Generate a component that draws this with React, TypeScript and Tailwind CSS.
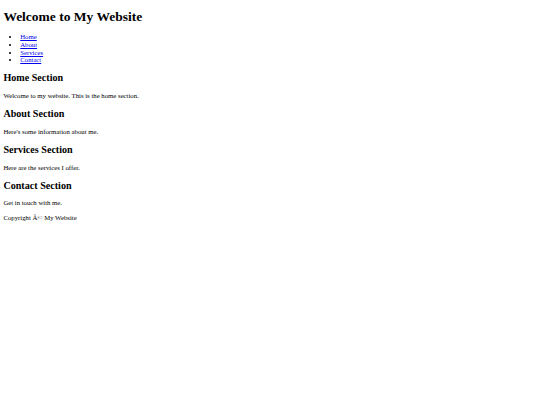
import React from "react";

const sections = [
  { title: "Home Section", text: "Welcome to my website. This is the home section." },
  { title: "About Section", text: "Here's some information about me." },
  { title: "Services Section", text: "Here are the services I offer." },
  { title: "Contact Section", text: "Get in touch with me." },
];

export default function App() {
  return (
    <div className="bg-white text-black text-[6.75px] leading-[7.65px] font-['Liberation_Serif','Times_New_Roman',serif]">
      <div className="m-[3.375px]">
        <header>
          <h1 className="text-[13.5px] leading-[15.4px] font-bold my-[9px]">Welcome to My Website</h1>
          <nav>
            <ul className="list-disc pl-[16.875px] my-[6.75px]">
              <li><a href="#home" className="text-[#0000EE] underline">Home</a></li>
              <li><a href="#about" className="text-[#0000EE] underline">About</a></li>
              <li><a href="#services" className="text-[#0000EE] underline">Services</a></li>
              <li><a href="#contact" className="text-[#0000EE] underline">Contact</a></li>
            </ul>
          </nav>
        </header>
        <main>
          {sections.map((s) => (
            <section key={s.title}>
              <h2 className="text-[10.125px] leading-[11.5px] font-bold my-[8.3px]">{s.title}</h2>
              <p className="my-[6.75px]">{s.text}</p>
            </section>
          ))}
        </main>
        <footer>
          <p className="my-[6.75px]">Copyright Â© My Website</p>
        </footer>
      </div>
    </div>
  );
}
